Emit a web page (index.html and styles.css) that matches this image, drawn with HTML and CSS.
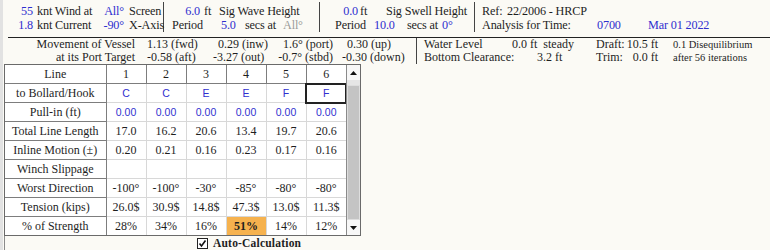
FILE: index.html
```html
<!DOCTYPE html>
<html>
<head>
<meta charset="utf-8">
<link rel="stylesheet" href="styles.css">
</head>
<body>
<div class="page">
  <div class="top">
    <div class="sec s1">
      <div class="ln"><span class="b n1">55</span><span class="l1">knt Wind at</span><span class="b v1">All°</span><span class="u1">Screen</span></div>
      <div class="ln"><span class="b n1">1.8</span><span class="l1">knt Current</span><span class="b v1">-90°</span><span class="u1">X-Axis</span></div>
    </div>
    <div class="sec s2">
      <div class="ln"><span class="b n2">6.0</span><span class="ft2">ft</span><span>Sig Wave Height</span></div>
      <div class="ln"><span class="p2">Period</span><span class="b v2">5.0</span><span class="sa2">secs at</span><span class="g">All°</span></div>
    </div>
    <div class="sec s3">
      <div class="ln"><span class="b n3">0.0</span><span class="ft3">ft</span><span>Sig Swell Height</span></div>
      <div class="ln"><span class="p3">Period</span><span class="b v3">10.0</span><span class="sa3">secs at</span><span class="b">0°</span></div>
    </div>
    <div class="sec s4">
      <div class="ln"><span class="ref">Ref:</span><span>22/2006 - HRCP</span></div>
      <div class="ln"><span class="an">Analysis for Time:</span><span class="b tm">0700</span><span class="b">Mar 01 2022</span></div>
    </div>
  </div>
  <div class="rule"></div>
  <div class="move">
    <div class="mleft">
      <div class="ln"><span class="mlab">Movement of Vessel</span><span class="c2">1.13 (fwd)</span><span class="c3 ind5">0.29 (inw)</span><span class="c4">1.6° (port)</span><span class="c5 ind5">0.30 (up)</span></div>
      <div class="ln"><span class="mlab">at its Port Target</span><span class="c2">-0.58 (aft)</span><span class="c3">-3.27 (out)</span><span class="c4">-0.7° (stbd)</span><span class="c5">-0.30 (down)</span></div>
    </div>
    <div class="mright">
      <div class="ln"><span class="rlab">Water Level</span><span class="rval">0.0 ft&nbsp;&nbsp;steady</span><span class="rdl">Draft:</span><span class="rnum">10.5 ft</span><span class="small">0.1 Disequilibrium</span></div>
      <div class="ln"><span class="rlab">Bottom Clearance:</span><span class="rval ind25">3.2 ft</span><span class="rdl">Trim:</span><span class="rnum">0.0 ft</span><span class="small">after 56 iterations</span></div>
    </div>
  </div>
  <div class="gridbox">
    <table class="grid">
      <colgroup><col class="cfirst"><col class="cv"><col class="cv"><col class="cv"><col class="cv"><col class="cv"><col class="cv"></colgroup>
      <tr><th>Line</th><th>1</th><th>2</th><th>3</th><th>4</th><th>5</th><th>6</th></tr>
      <tr><th>to Bollard/Hook</th><td class="bl">C</td><td class="bl">C</td><td class="bl">E</td><td class="bl">E</td><td class="bl">F</td><td class="bl sel">F</td></tr>
      <tr><th>Pull-in (ft)</th><td class="bl">0.00</td><td class="bl">0.00</td><td class="bl">0.00</td><td class="bl">0.00</td><td class="bl">0.00</td><td class="bl">0.00</td></tr>
      <tr><th>Total Line Length</th><td>17.0</td><td>16.2</td><td>20.6</td><td>13.4</td><td>19.7</td><td>20.6</td></tr>
      <tr><th>Inline Motion (±)</th><td>0.20</td><td>0.21</td><td>0.16</td><td>0.23</td><td>0.17</td><td>0.16</td></tr>
      <tr><th>Winch Slippage</th><td></td><td></td><td></td><td></td><td></td><td></td></tr>
      <tr><th>Worst Direction</th><td>-100°</td><td>-100°</td><td>-30°</td><td>-85°</td><td>-80°</td><td>-80°</td></tr>
      <tr><th>Tension (kips)</th><td>26.0$</td><td>30.9$</td><td>14.8$</td><td>47.3$</td><td>13.0$</td><td>11.3$</td></tr>
      <tr><th>% of Strength</th><td>28%</td><td>34%</td><td>16%</td><td class="hot">51%</td><td>14%</td><td>12%</td></tr>
    </table>
    <div class="sb">
      <div class="sbbtn"><svg width="7" height="4" viewBox="0 0 7 4"><polygon points="0,4 7,4 3.5,0" fill="#111"/></svg></div>
      <div class="sbgap"></div>
      <div class="sbthumb"></div>
      <div class="sbbtn"><svg width="7" height="4" viewBox="0 0 7 4"><polygon points="0,0 7,0 3.5,4" fill="#111"/></svg></div>
    </div>
  </div>
  <div class="auto">
    <span class="chk"><svg width="9" height="9" viewBox="0 0 9 9"><polyline points="1.5,4.5 3.5,7 7.5,1.5" fill="none" stroke="#111" stroke-width="1.6"/></svg></span>
    <span class="autotxt">Auto-Calculation</span>
  </div>
</div>
</body>
</html>
```

FILE: styles.css
```css
html, body {
  margin: 0;
  padding: 0;
  background: #fbfaf5;
}
.page {
  width: 770px;
  height: 250px;
  overflow: hidden;
  font-family: "Liberation Serif", "Times New Roman", serif;
  font-size: 12px;
  color: #1e1e1e;
  box-shadow: inset 3px 0 0 #e2e2e2;
}
.ln {
  display: flex;
  white-space: nowrap;
}
.ln > span {
  display: inline-block;
  flex: none;
}
.b { color: #2f2fcf; }
.g { color: #9a9a9a; }

/* top block */
.top {
  display: flex;
  height: 37px;
}
.sec {
  margin-top: 2px;
  padding-top: 2px;
  height: 28px;
  line-height: 14px;
  border-right: 1px solid #444;
  font-size: 12.2px;
  letter-spacing: -0.15px;
}
.s1 { width: 163px; }
.s2 { width: 155px; }
.s3 { width: 154px; }
.s4 { border-right: none; padding-left: 7px; }

.n1 { width: 33px; text-align: right; }
.l1 { width: 65px; margin-left: 4px; }
.v1 { width: 22px; text-align: right; }
.u1 { margin-left: 5px; }

.n2 { width: 36px; text-align: right; }
.ft2 { width: 15px; margin-left: 4px; }
.p2 { width: 49px; margin-left: 8px; }
.v2 { width: 24px; }
.sa2 { width: 38px; }

.n3 { width: 38px; text-align: right; }
.ft3 { width: 26px; padding-left: 2px; }
.p3 { width: 39px; margin-left: 15px; }
.v3 { width: 33px; }
.sa3 { width: 35px; }

.ref { width: 25px; }
.an { width: 115px; }
.tm { width: 51px; }

.rule {
  margin-left: 8px;
  height: 1px;
  background: #222;
}

/* movement block */
.move {
  display: flex;
  height: 26px;
  line-height: 13px;
}
.mleft {
  width: 416px;
  border-right: 1px solid #444;
}
.mlab { width: 135px; text-align: right; }
.c2 { width: 66px; margin-left: 12px; }
.c3 { width: 57px; }
.c4 { width: 63px; text-align: right; }
.c5 { margin-left: 9px; }
.ind5 { padding-left: 5px; }
.c3.ind5 { width: 52px; }

.mright { padding-left: 7px; }
.rlab { width: 88px; }
.rval { width: 84px; }
.ind25 { padding-left: 25px; width: 59px; }
.rdl { width: 26px; }
.rnum { width: 36px; text-align: right; }
.small { margin-left: 15px; font-size: 10.5px; }

/* grid */
.gridbox {
  display: flex;
  margin-left: 4px;
  width: 357px;
  box-sizing: border-box;
  border: 1px solid #6a6a6a;
  background: #fff;
}
.grid {
  border-collapse: collapse;
  border-style: hidden;
  table-layout: fixed;
  width: 341px;
}
.cfirst { width: 101px; }
.cv { width: 40px; }
.grid th, .grid td {
  height: 18px;
  padding: 0;
  text-align: center;
  white-space: nowrap;
  line-height: 18px;
  font-size: 12px;
}
.grid th {
  font-weight: normal;
  border: 1px solid #7d7d7d;
}
.grid td {
  border: 1px solid #d8d8d8;
}
.grid td.bl {
  font-family: "Liberation Sans", Arial, sans-serif;
  font-size: 10.5px;
  color: #2f2fcf;
}
.grid td.sel {
  outline: 2px solid #222;
  outline-offset: -1px;
}
.grid td.hot {
  background: #f6b24e;
  font-weight: bold;
}
.sb {
  width: 14px;
  display: flex;
  flex-direction: column;
  border-left: 1px solid #8a8a8a;
  background: #e4e4e4;
}
.sbbtn {
  height: 15px;
  display: flex;
  align-items: center;
  justify-content: center;
  background: #f7f7f7;
}
.sbgap { height: 5px; background: #e6e6e6; }
.sbthumb {
  flex: 1;
  background: #c4c4c4;
  border: 1px solid #dedede;
}

/* auto calc */
.auto {
  margin-left: 4px;
  height: 14px;
  display: flex;
  align-items: center;
  border-left: 1px solid #8a8a8a;
}
.chk {
  margin-left: 192px;
  width: 9px;
  height: 9px;
  border: 1px solid #222;
  background: #fff;
  display: flex;
}
.autotxt {
  margin-left: 5px;
  font-weight: bold;
  font-size: 11.5px;
  letter-spacing: 0.2px;
}
```
